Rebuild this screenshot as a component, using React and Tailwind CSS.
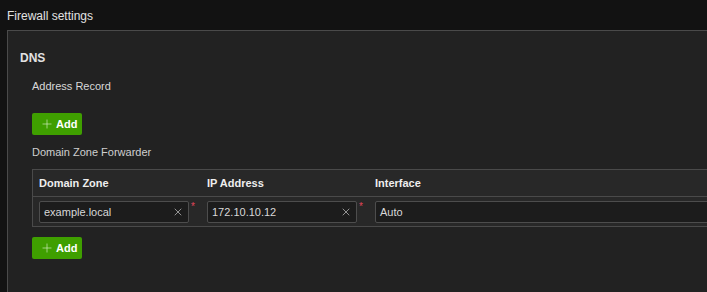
import { Plus, X } from 'lucide-react';

const AddButton = () => (
  <button className="flex items-center h-[22px] w-[50px] bg-[#3f9f00] text-white text-[11px] font-bold rounded-[2px] pl-[8px] gap-[2px]">
    <Plus size={14} strokeWidth={1.1} className="text-[#d8f0c8]" />
    Add
  </button>
);

const ClearInput = ({ value }) => (
  <div className="flex items-start gap-[2px]">
    <div className="flex-1 flex items-center h-[22px] border border-[#4d4d4d] bg-[#1c1c1c] rounded-[2px] px-[4px]">
      <span className="flex-1 text-[11px] text-[#d8d8d8]">{value}</span>
      <X size={12} strokeWidth={1.5} className="text-[#bbbbbb]" />
    </div>
    <span className="text-[#e0455a] text-[10px] leading-none mt-[1px] w-[4px]">*</span>
  </div>
);

const App = () => {
  return (
    <div className="w-[707px] h-[292px] overflow-hidden bg-[#121212] text-[#e2e2e2]" style={{ fontFamily: '"Liberation Sans", Arial, sans-serif' }}>
      <div className="h-[30px] pl-[7px] pt-[9px] text-[12px] leading-[14px]">Firewall settings</div>
      <div className="ml-[7px] border-t border-l border-[#4a4a4a] bg-[#222222] h-[262px] pl-[12px]">
        <div className="pt-[20px] text-[12px] font-bold leading-[14px]">DNS</div>
        <div className="pl-[12px]">
          <div className="mt-[15px] text-[11px] leading-[13px] text-[#d8d8d8]">Address Record</div>
          <div className="mt-[20px]"><AddButton /></div>
          <div className="mt-[11px] text-[11px] leading-[13px] text-[#cfcfcf]">Domain Zone Forwarder</div>
          <div className="mt-[10px] border-t border-l border-b border-[#4a4a4a] bg-[#282828] w-[700px]">
            <div className="grid grid-cols-[168px_168px_1fr] h-[27px] items-center border-b border-[#4a4a4a] text-[11px] font-bold text-[#eeeeee] pl-[6px]">
              <div>Domain Zone</div>
              <div>IP Address</div>
              <div>Interface</div>
            </div>
            <div className="grid grid-cols-[168px_168px_1fr] h-[29px] pt-[4px] pl-[6px]">
              <div className="pr-[12px]"><ClearInput value="example.local" /></div>
              <div className="pr-[12px]"><ClearInput value="172.10.10.12" /></div>
              <div className="flex items-center h-[22px] border border-[#4d4d4d] bg-[#1c1c1c] rounded-[2px] px-[4px] text-[11px] text-[#d8d8d8]">Auto</div>
            </div>
          </div>
          <div className="mt-[10px]"><AddButton /></div>
        </div>
      </div>
    </div>
  );
};

export default App;
